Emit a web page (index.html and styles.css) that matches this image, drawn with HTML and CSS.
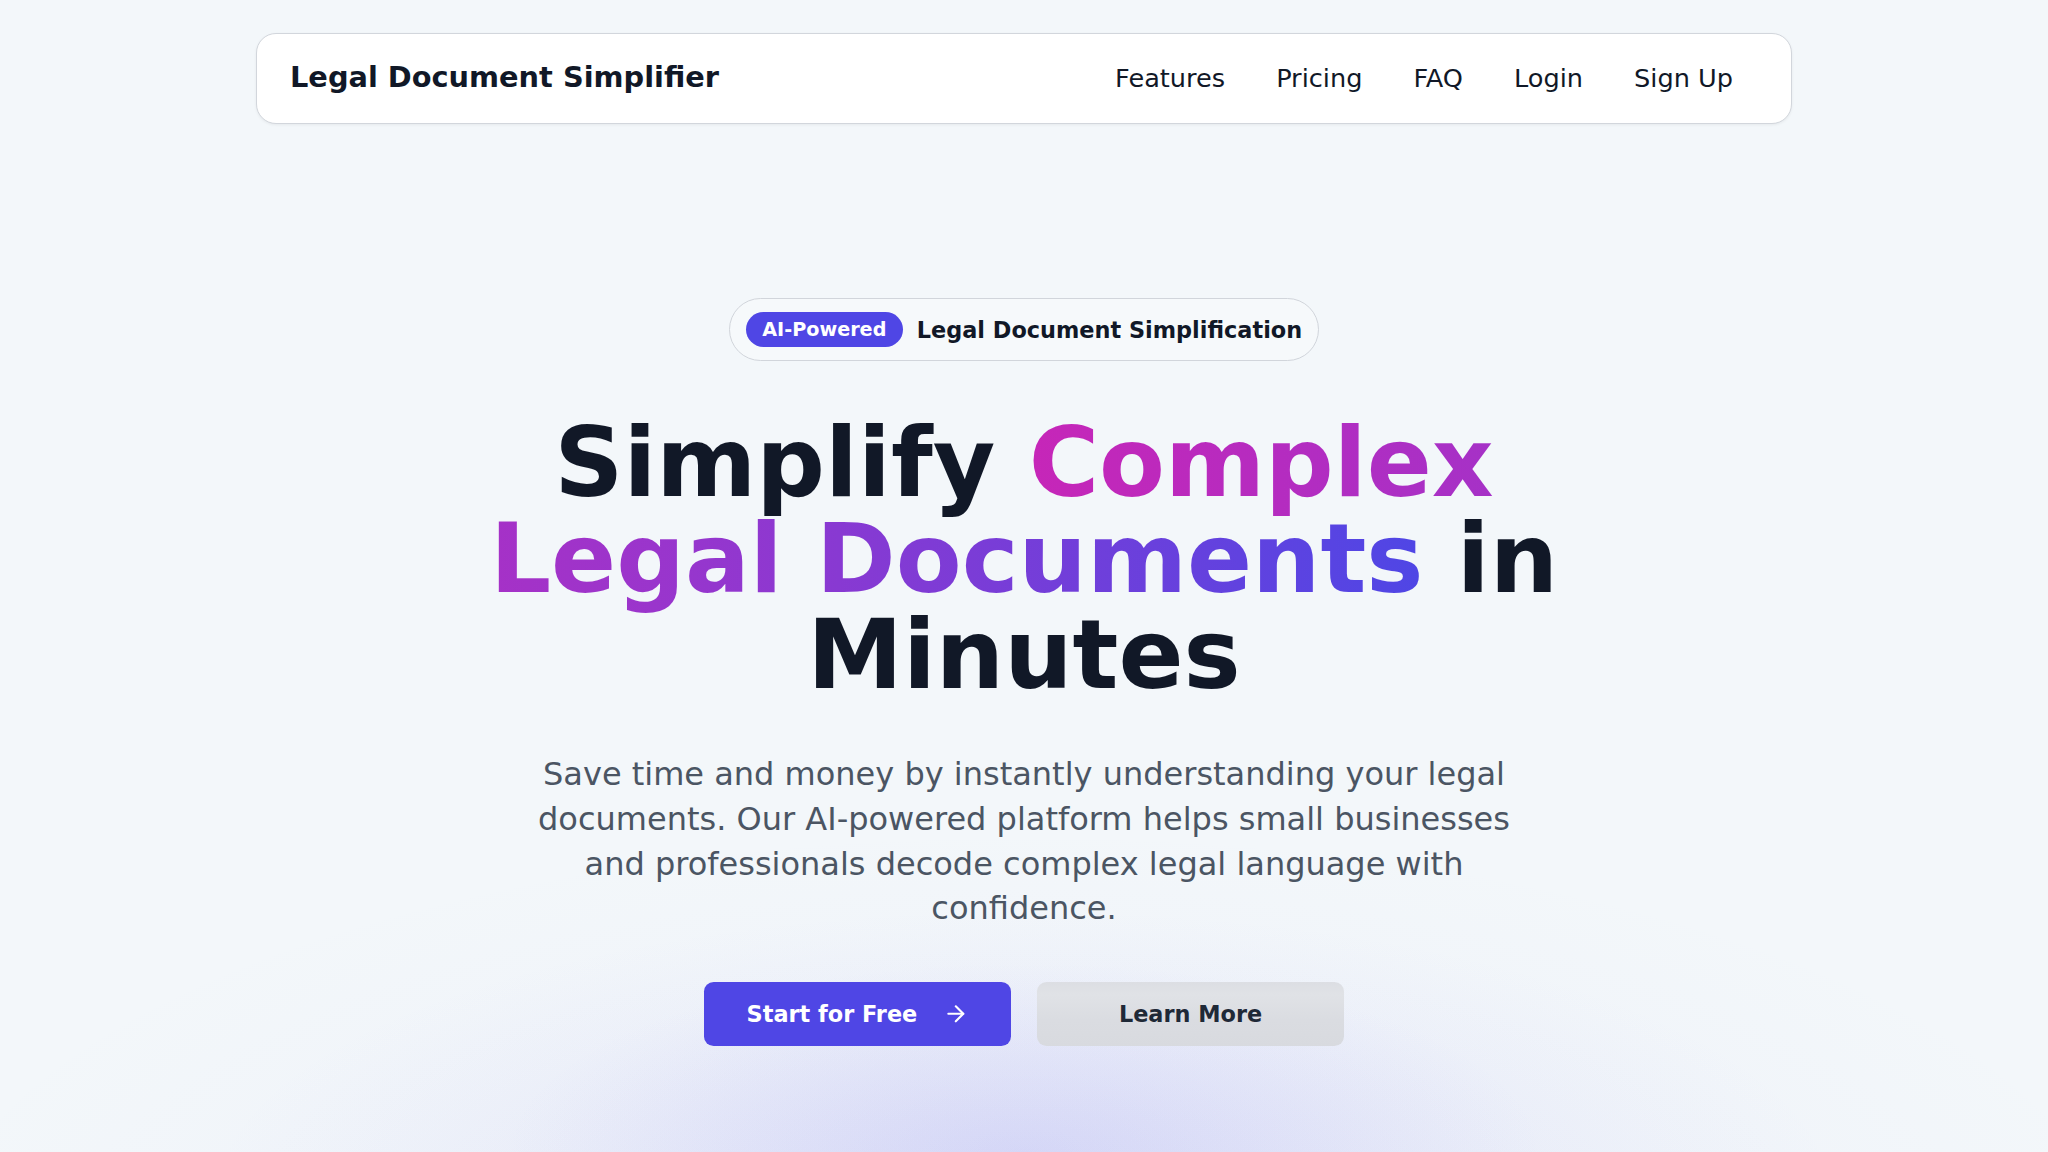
FILE: index.html
```html
<!DOCTYPE html>
<html lang="en">
<head>
<meta charset="utf-8">
<title>Legal Document Simplifier</title>
<link rel="stylesheet" href="styles.css">
</head>
<body>
<div class="page">
  <header class="nav">
    <div class="logo">Legal Document Simplifier</div>
    <nav class="links">
      <a href="#">Features</a>
      <a href="#">Pricing</a>
      <a href="#">FAQ</a>
      <a href="#">Login</a>
      <a href="#">Sign Up</a>
    </nav>
  </header>
  <main class="hero">
    <div class="badge">
      <span class="badge-pill">AI-Powered</span>
      <span class="badge-text">Legal Document Simplification</span>
    </div>
    <h1 class="title">Simplify <span class="grad">Complex Legal Documents</span> in Minutes</h1>
    <p class="lead">Save time and money by instantly understanding your legal documents. Our AI-powered platform helps small businesses and professionals decode complex legal language with confidence.</p>
    <div class="actions">
      <a class="btn btn-primary" href="#">Start for Free
        <svg class="arrow" viewBox="0 0 24 24" fill="none" stroke="currentColor" stroke-width="2" stroke-linecap="round" stroke-linejoin="round"><path d="M5 12h14"/><path d="m12 5 7 7-7 7"/></svg>
      </a>
      <a class="btn btn-secondary" href="#">Learn More</a>
    </div>
  </main>
</div>
</body>
</html>
```
FILE: styles.css
```css
* { box-sizing: border-box; }
html, body { margin: 0; padding: 0; }
body {
  font-family: "DejaVu Sans", "Liberation Sans", sans-serif;
  background-color: #f3f7fa;
  color: #111827;
}
.page {
  min-height: 1152px;
  height: 1152px;
  overflow: hidden;
  background:
    radial-gradient(ellipse 520px 190px at 50% 100%, rgba(120, 115, 240, 0.13), rgba(120, 115, 240, 0) 100%),
    radial-gradient(ellipse 820px 290px at 50% 104%, rgba(130, 125, 235, 0.12), rgba(130, 125, 235, 0) 100%),
    radial-gradient(ellipse 1120px 440px at 50% 110%, rgba(150, 150, 235, 0.08), rgba(150, 150, 235, 0) 100%),
    #f3f7fa;
  padding-top: 33px;
}
.nav {
  max-width: 1536px;
  height: 91px;
  margin: 0 auto;
  background: #ffffff;
  border: 1.6px solid #d2d6dc;
  border-radius: 20px;
  box-shadow: 0 1px 3px rgba(0, 0, 0, 0.06);
  display: flex;
  align-items: center;
  justify-content: space-between;
  padding: 0 58px 0 33px;
}
.logo {
  font-size: 28.8px;
  font-weight: 700;
  color: #111827;
  margin-top: -3px;
}
.links {
  display: flex;
  gap: 51px;
  align-items: center;
  margin-top: -2px;
}
.links a {
  font-size: 25.6px;
  color: #111827;
  text-decoration: none;
}
.hero {
  display: flex;
  flex-direction: column;
  align-items: center;
  padding-top: 174px;
}
.badge {
  display: flex;
  align-items: center;
  gap: 14px;
  height: 63px;
  padding: 0 16px 0 16px;
  border: 1.6px solid #d1d5db;
  border-radius: 999px;
  background: rgba(255, 255, 255, 0.25);
}
.badge-pill {
  display: flex;
  align-items: center;
  height: 35px;
  padding: 0 16.4px;
  border-radius: 999px;
  background: #4f46e5;
  color: #ffffff;
  font-size: 19.2px;
  font-weight: 700;
}
.badge-text {
  font-size: 22.4px;
  font-weight: 700;
  color: #111827;
}
.title {
  margin: 54px 0 0;
  max-width: 1152px;
  font-size: 96px;
  line-height: 1;
  font-weight: 700;
  text-align: center;
  color: #111827;
}
.grad {
  background-image: linear-gradient(90deg, #c626b8 0%, #9a35cc 45%, #4f46e5 100%);
  -webkit-background-clip: text;
  background-clip: text;
  color: transparent;
}
.lead {
  margin: 49px 0 0;
  max-width: 1004px;
  font-size: 32px;
  line-height: 44.8px;
  color: #4b5563;
  text-align: center;
}
.actions {
  display: flex;
  gap: 26px;
  margin-top: 51px;
}
.btn {
  width: 307px;
  height: 64px;
  border-radius: 9.6px;
  display: flex;
  align-items: center;
  justify-content: center;
  gap: 25.6px;
  font-size: 22.4px;
  font-weight: 700;
  text-decoration: none;
}
.btn-primary {
  background: #4f46e5;
  color: #ffffff;
}
.btn-secondary {
  background: linear-gradient(180deg, #dcdee3 0%, #e0e2e6 20%, #dadce1 60%, #d8dadf 100%);
  color: #1f2937;
}
.arrow {
  width: 25.6px;
  height: 25.6px;
}
```
